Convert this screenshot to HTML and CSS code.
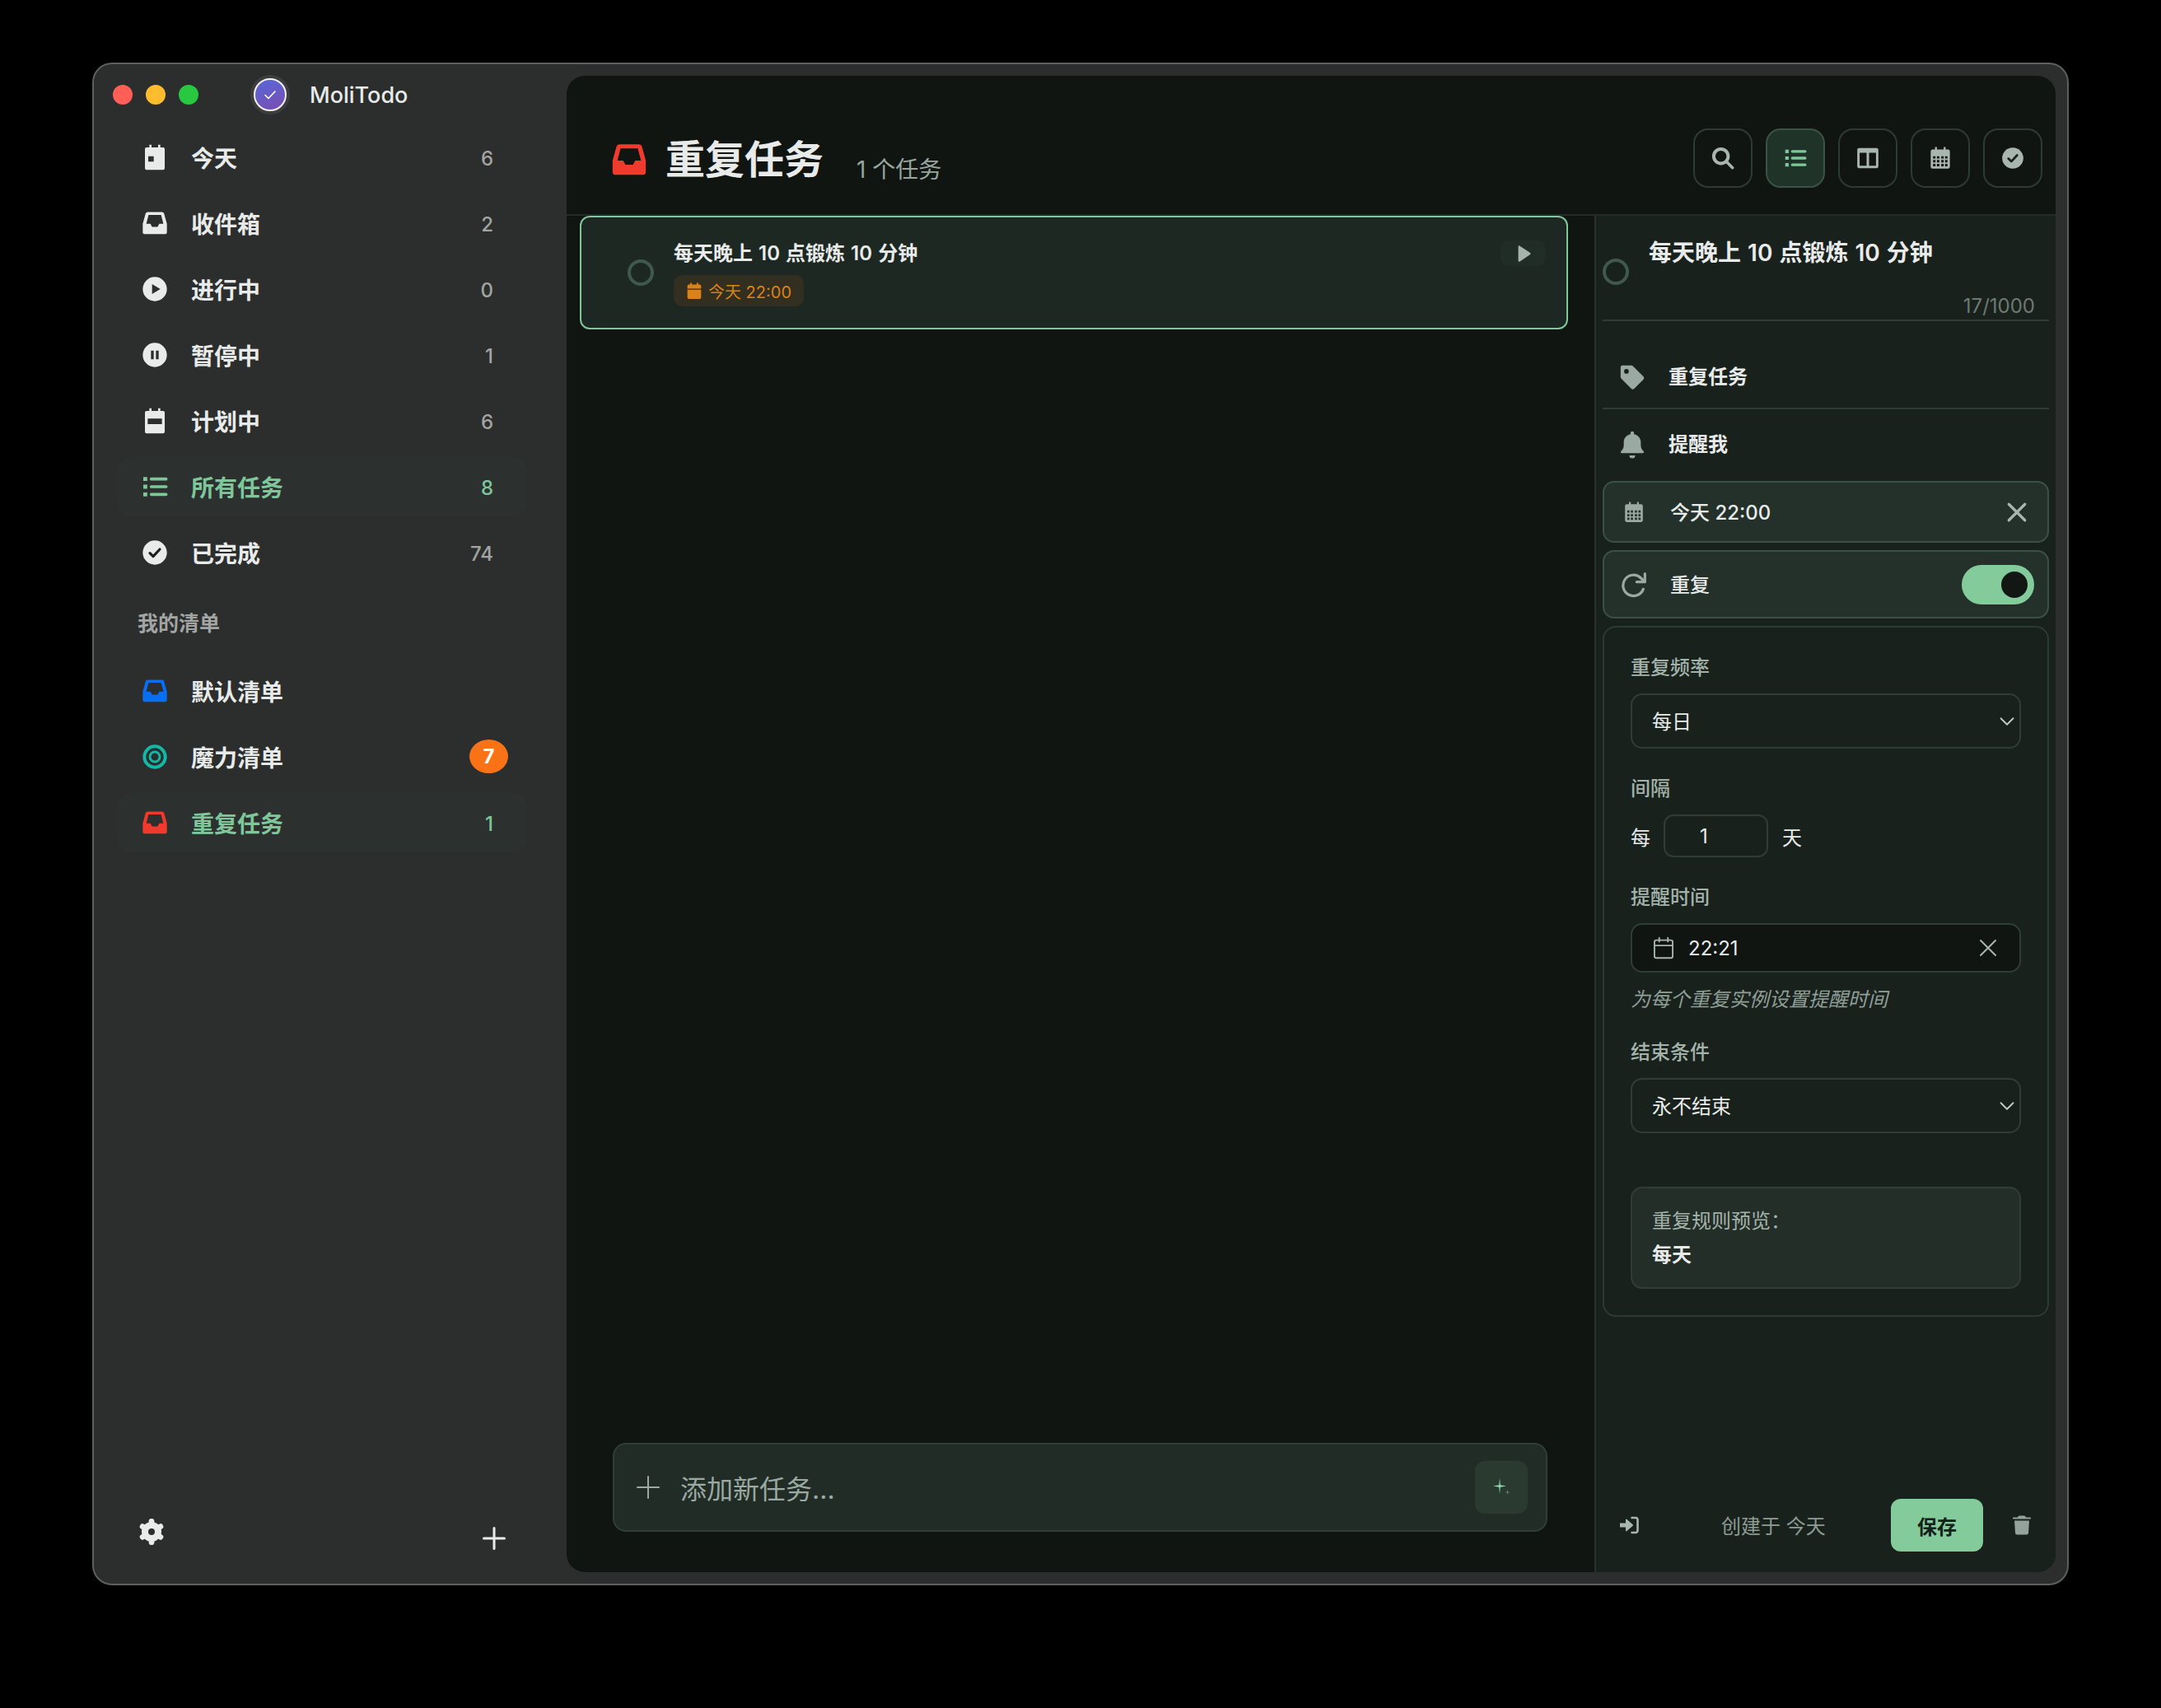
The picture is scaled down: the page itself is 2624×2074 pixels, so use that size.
FILE: index.html
```html
<!DOCTYPE html>
<html lang="zh-CN">
<head>
    <meta charset="UTF-8">
    <title>MoliTodo</title>
    <link rel="stylesheet" href="styles.css">
</head>
<body>
    <svg class="icon-defs" xmlns="http://www.w3.org/2000/svg">
        <symbol id="i-today" viewBox="0 0 24 24"><path fill="currentColor" fill-rule="evenodd" d="M7 .5h2V3h6V.5h2V3h2.500A1.500 1.500 0 0 1 21 4.500V22a1.500 1.500 0 0 1-1.500 1.500h-15A1.500 1.500 0 0 1 3 22V4.500A1.500 1.500 0 0 1 4.500 3H7zM6 11v5h5v-5z"/></symbol>
        <symbol id="i-plan" viewBox="0 0 24 24"><path fill="currentColor" fill-rule="evenodd" d="M7 .5h2V3h6V.5h2V3h2.500A1.500 1.500 0 0 1 21 4.500V22a1.500 1.500 0 0 1-1.500 1.500h-15A1.500 1.500 0 0 1 3 22V4.500A1.500 1.500 0 0 1 4.500 3H7zM5.500 10v5h13v-5z"/></symbol>
        <symbol id="i-cal-solid" viewBox="0 0 24 24"><path fill="currentColor" d="M6 .5h2.500V3h7V.5H18V3h2a2 2 0 0 1 2 2v4H2V5a2 2 0 0 1 2-2h2zM2 10.500h20V22a2 2 0 0 1-2 2H4a2 2 0 0 1-2-2z"/></symbol>
        <symbol id="i-cal-grid" viewBox="0 0 24 24"><path fill="currentColor" fill-rule="evenodd" d="M6.500 .5h2V3h7V.5h2V3H20a2 2 0 0 1 2 2v16a2 2 0 0 1-2 2H4a2 2 0 0 1-2-2V5a2 2 0 0 1 2-2h2.500zM4.500 10v2.500H7V10zm4 0v2.500H11V10zm4.500 0v2.500h2.500V10zm4 0v2.500h2.500V10zM4.500 14v2.500H7V14zm4 0v2.500H11V14zm4.500 0v2.500h2.500V14zm4 0v2.500h2.500V14zM4.500 18v2.500H7V18zm4 0v2.500H11V18zm4.500 0v2.500h2.500V18zm4 0v2.500h2.500V18z"/></symbol>
        <symbol id="i-cal-line" viewBox="0 0 24 24"><g fill="none" stroke="currentColor" stroke-width="1.600" stroke-linecap="round"><rect x="2.500" y="4" width="19" height="18.500" rx="2"/><path d="M2.500 9.500h19M7.500 1.500v4M16.500 1.500v4"/></g></symbol>
        <symbol id="i-inbox" viewBox="0 0 24 24"><path fill="currentColor" fill-rule="evenodd" d="M5.500 1.800h13a2 2 0 0 1 1.900 1.400L23 12.500V20a2 2 0 0 1-2 2H3a2 2 0 0 1-2-2v-7.500l2.600-9.300A2 2 0 0 1 5.500 1.800zM6.300 4.500 4.200 12.500H8l1.500 2.800h5l1.500-2.800h3.800l-2.100-8z"/></symbol>
        <symbol id="i-play-circle" viewBox="0 0 24 24"><path fill="currentColor" fill-rule="evenodd" d="M12 1a11 11 0 1 1 0 22 11 11 0 0 1 0-22zM9.500 7.500v9l7.500-4.500z"/></symbol>
        <symbol id="i-pause-circle" viewBox="0 0 24 24"><path fill="currentColor" fill-rule="evenodd" d="M12 1a11 11 0 1 1 0 22 11 11 0 0 1 0-22zM8.500 8v8H11V8zm4.500 0v8h2.500V8z"/></symbol>
        <symbol id="i-check-circle" viewBox="0 0 24 24"><circle cx="12" cy="12" r="11" fill="currentColor"/><path d="M7.500 12.500l3 3 6-6.500" fill="none" stroke="#1b211e" stroke-width="2.400" stroke-linecap="round" stroke-linejoin="round"/></symbol>
        <symbol id="i-list" viewBox="0 0 24 24"><path fill="currentColor" d="M1.500 3.200h3.600v3.600H1.500zM1.500 10.200h3.600v3.600H1.500zM1.500 17.200h3.600v3.600H1.500z"/><path d="M8.800 5h13.400M8.800 12h13.400M8.800 19h13.400" fill="none" stroke="currentColor" stroke-width="2.800" stroke-linecap="round"/></symbol>
        <symbol id="i-target" viewBox="0 0 24 24"><g fill="none" stroke="currentColor"><circle cx="12" cy="12" r="9.500" stroke-width="3"/><circle cx="12" cy="12" r="4.500" stroke-width="2.200"/></g></symbol>
        <symbol id="i-gear" viewBox="0 0 24 24"><circle cx="12" cy="12" r="6" fill="none" stroke="currentColor" stroke-width="6"/><g stroke="currentColor" stroke-width="5" stroke-linecap="round"><path d="M12 2.500v3"/><path d="M12 18.500v3"/><path d="M3.800 7.200l2.600 1.500"/><path d="M17.600 15.300l2.600 1.500"/><path d="M3.800 16.800l2.600-1.500"/><path d="M17.600 8.700l2.600-1.500"/></g></symbol>
        <symbol id="i-search" viewBox="0 0 24 24"><g fill="none" stroke="currentColor" stroke-linecap="round"><circle cx="10" cy="10" r="7.500" stroke-width="3.400"/><path d="M15.500 15.500 22 22" stroke-width="3"/></g></symbol>
        <symbol id="i-columns" viewBox="0 0 24 24"><path fill="currentColor" fill-rule="evenodd" d="M3 1.500h18a2 2 0 0 1 2 2v17a2 2 0 0 1-2 2H3a2 2 0 0 1-2-2v-17a2 2 0 0 1 2-2zM3.500 6.500v13.500H10.700V6.500zm9.800 0v13.500h7.200V6.500z"/></symbol>
        <symbol id="i-play" viewBox="0 0 24 24"><path fill="currentColor" d="M5 2.500c0-1 1-1.500 1.800-1l14 9.500c.7.500.7 1.500 0 2l-14 9.500c-.8.500-1.800 0-1.800-1z"/></symbol>
        <symbol id="i-tag" viewBox="0 0 24 24"><path fill="currentColor" fill-rule="evenodd" d="M2 3.500A1.500 1.500 0 0 1 3.500 2h7.800a2 2 0 0 1 1.400.6l8.700 8.700a2 2 0 0 1 0 2.800l-7.600 7.600a2 2 0 0 1-2.800 0l-8.400-8.400A2 2 0 0 1 2 11.300zM7 5a2 2 0 1 0 0 4 2 2 0 0 0 0-4z"/></symbol>
        <symbol id="i-bell" viewBox="0 0 24 24"><path fill="currentColor" d="M12 .5a1.500 1.500 0 0 1 1.500 1.500v1c3.500.7 5.800 3.500 5.800 7v2.500c0 2 .9 3.700 2.400 5.200.6.600.2 1.600-.7 1.600H3c-.9 0-1.300-1-.7-1.600 1.500-1.500 2.400-3.200 2.400-5.200V10c0-3.500 2.300-6.300 5.800-7V2A1.500 1.500 0 0 1 12 .5zM9.500 21.200h5a2.500 2.500 0 0 1-5 0z"/></symbol>
        <symbol id="i-repeat" viewBox="0 0 24 24"><path d="M20.500 16a9.500 9.500 0 1 1-2.300-10.200L22 9.500M22 2v7.500h-7.500" fill="none" stroke="currentColor" stroke-width="2.400" stroke-linecap="round" stroke-linejoin="round"/></symbol>
        <symbol id="i-x" viewBox="0 0 24 24"><path d="M3 3l18 18M21 3 3 21" fill="none" stroke="currentColor" stroke-width="3" stroke-linecap="round"/></symbol>
        <symbol id="i-x-thin" viewBox="0 0 24 24"><path d="M3 3l18 18M21 3 3 21" fill="none" stroke="currentColor" stroke-width="2" stroke-linecap="round"/></symbol>
        <symbol id="i-chevron" viewBox="0 0 24 24"><path d="M2 7l10 10L22 7" fill="none" stroke="currentColor" stroke-width="2.400" stroke-linecap="round" stroke-linejoin="round"/></symbol>
        <symbol id="i-sign-in" viewBox="0 0 24 24"><path fill="currentColor" d="M1 9.500h7V5.200c0-.6.700-.9 1.200-.5l7.500 6.600c.4.400.4 1 0 1.400l-7.500 6.600c-.5.400-1.200.1-1.200-.5v-4.300H1z"/><path d="M15.500 3H20a2.500 2.500 0 0 1 2.500 2.500v13A2.500 2.500 0 0 1 20 21h-4.500" fill="none" stroke="currentColor" stroke-width="2.600" stroke-linecap="round"/></symbol>
        <symbol id="i-trash" viewBox="0 0 24 24"><path fill="currentColor" d="M9 .5h6c.6 0 1 .3 1.300.8L17 2.500h5c.6 0 1 .4 1 1s-.4 1-1 1H2c-.6 0-1-.4-1-1s.4-1 1-1h5l.7-1.200C8 .8 8.400.5 9 .5zM3 6.500h18L20 21.500a2.200 2.200 0 0 1-2.200 2H6.200a2.200 2.200 0 0 1-2.200-2z"/></symbol>
        <symbol id="i-plus" viewBox="0 0 24 24"><path d="M12 2v20M2 12h20" fill="none" stroke="currentColor" stroke-width="2.400" stroke-linecap="round"/></symbol>
        <symbol id="i-plus-thin" viewBox="0 0 24 24"><path d="M12 1v22M1 12h22" fill="none" stroke="currentColor" stroke-width="1.600"/></symbol>
        <symbol id="i-sparkle" viewBox="0 0 24 24"><path fill="currentColor" d="M10 1l.8 8.200L18 10.500l-7.200 1.300L10 20l-.8-8.200L2 10.500l7.200-1.300zM19.500 15l.3 2.700 2.700.3-2.700.3-.3 2.700-.3-2.700-2.700-.3 2.700-.3z"/></symbol>
    </svg>

    <div class="window">
        <aside class="sidebar">
            <div class="titlebar">
                <span class="light red"></span>
                <span class="light yellow"></span>
                <span class="light green"></span>
                <span class="logo">
                    <svg viewBox="0 0 24 24"><path d="M6 12.500l4 4 8-8.500" fill="none" stroke="#fff" stroke-width="1.600" stroke-linecap="round" stroke-linejoin="round"/></svg>
                </span>
                <span class="app-name">MoliTodo</span>
            </div>

            <nav class="nav">
                <a class="nav-item"><span class="nav-icon"><svg><use href="#i-today"/></svg></span><span class="nav-text">今天</span><span class="count">6</span></a>
                <a class="nav-item"><span class="nav-icon"><svg><use href="#i-inbox"/></svg></span><span class="nav-text">收件箱</span><span class="count">2</span></a>
                <a class="nav-item"><span class="nav-icon"><svg><use href="#i-play-circle"/></svg></span><span class="nav-text">进行中</span><span class="count">0</span></a>
                <a class="nav-item"><span class="nav-icon"><svg><use href="#i-pause-circle"/></svg></span><span class="nav-text">暂停中</span><span class="count">1</span></a>
                <a class="nav-item"><span class="nav-icon"><svg><use href="#i-plan"/></svg></span><span class="nav-text">计划中</span><span class="count">6</span></a>
                <a class="nav-item active"><span class="nav-icon"><svg><use href="#i-list"/></svg></span><span class="nav-text">所有任务</span><span class="count">8</span></a>
                <a class="nav-item"><span class="nav-icon"><svg><use href="#i-check-circle"/></svg></span><span class="nav-text">已完成</span><span class="count">74</span></a>

                <div class="nav-label">我的清单</div>

                <a class="nav-item"><span class="nav-icon blue"><svg><use href="#i-inbox"/></svg></span><span class="nav-text">默认清单</span></a>
                <a class="nav-item"><span class="nav-icon teal"><svg><use href="#i-target"/></svg></span><span class="nav-text">魔力清单</span><span class="badge">7</span></a>
                <a class="nav-item active"><span class="nav-icon red-icon"><svg><use href="#i-inbox"/></svg></span><span class="nav-text">重复任务</span><span class="count">1</span></a>
            </nav>

            <div class="sidebar-footer">
                <svg class="gear"><use href="#i-gear"/></svg>
                <svg class="add-list"><use href="#i-plus"/></svg>
            </div>
        </aside>

        <main class="main">
            <header class="header">
                <svg class="header-icon"><use href="#i-inbox"/></svg>
                <div class="header-title">
                    <h1>重复任务</h1>
                    <span class="task-total">1 个任务</span>
                </div>
                <div class="toolbar">
                    <button class="tool"><svg><use href="#i-search"/></svg></button>
                    <button class="tool active"><svg><use href="#i-list"/></svg></button>
                    <button class="tool"><svg><use href="#i-columns"/></svg></button>
                    <button class="tool"><svg><use href="#i-cal-grid"/></svg></button>
                    <button class="tool"><svg><use href="#i-check-circle"/></svg></button>
                </div>
            </header>

            <div class="content">
                <section class="list">
                    <div class="card">
                        <span class="ring"></span>
                        <div class="card-body">
                            <div class="card-title">每天晚上 10 点锻炼 10 分钟</div>
                            <span class="due"><svg><use href="#i-cal-solid"/></svg>今天 22:00</span>
                        </div>
                        <span class="play"><svg><use href="#i-play"/></svg></span>
                    </div>

                    <div class="add-bar">
                        <svg class="add-plus"><use href="#i-plus-thin"/></svg>
                        <span class="add-text">添加新任务...</span>
                        <span class="add-ai"><svg><use href="#i-sparkle"/></svg></span>
                    </div>
                </section>

                <section class="detail">
                    <div class="detail-head">
                        <span class="ring"></span>
                        <div class="detail-head-text">
                            <div class="detail-title">每天晚上 10 点锻炼 10 分钟</div>
                            <div class="char-count">17/1000</div>
                        </div>
                    </div>

                    <div class="meta-row tag-row"><svg><use href="#i-tag"/></svg><span>重复任务</span></div>
                    <div class="meta-row bell-row"><svg><use href="#i-bell"/></svg><span>提醒我</span></div>

                    <div class="box-row date-row">
                        <svg class="date-icon"><use href="#i-cal-grid"/></svg>
                        <span>今天 22:00</span>
                        <svg class="date-clear"><use href="#i-x"/></svg>
                    </div>
                    <div class="box-row repeat-row">
                        <svg class="repeat-icon"><use href="#i-repeat"/></svg>
                        <span>重复</span>
                        <span class="switch"></span>
                    </div>

                    <div class="repeat-panel">
                        <div class="field-label">重复频率</div>
                        <div class="select"><span>每日</span><svg><use href="#i-chevron"/></svg></div>

                        <div class="field-label">间隔</div>
                        <div class="interval">
                            <span>每</span>
                            <span class="num-input">1</span>
                            <span>天</span>
                        </div>

                        <div class="field-label">提醒时间</div>
                        <div class="time-input">
                            <svg class="time-icon"><use href="#i-cal-line"/></svg>
                            <span>22:21</span>
                            <svg class="time-clear"><use href="#i-x-thin"/></svg>
                        </div>
                        <div class="hint">为每个重复实例设置提醒时间</div>

                        <div class="field-label">结束条件</div>
                        <div class="select"><span>永不结束</span><svg><use href="#i-chevron"/></svg></div>

                        <div class="preview">
                            <div class="preview-label">重复规则预览：</div>
                            <div class="preview-value">每天</div>
                        </div>
                    </div>

                    <div class="detail-footer">
                        <svg class="foot-in"><use href="#i-sign-in"/></svg>
                        <span class="created">创建于 今天</span>
                        <button class="save">保存</button>
                        <svg class="foot-trash"><use href="#i-trash"/></svg>
                    </div>
                </section>
            </div>
        </main>
    </div>
</body>
</html>
```

FILE: styles.css
```css
* {
    box-sizing: border-box;
}

html, body {
    margin: 0;
    height: 2074px;
    background-color: #000;
}

body {
    padding: 76px 0 0 112px;
    font-family: Inter, "Noto Sans CJK SC", sans-serif;
    font-size: 24px;
    color: #e8ebe9;
    overflow: hidden;
}

svg {
    display: block;
}

.icon-defs {
    display: none;
}

.window {
    display: flex;
    width: 2400px;
    height: 1849px;
    background-color: #2b2e2d;
    border: 2px solid #5c5f5e;
    border-radius: 24px;
}

/* sidebar */
.sidebar {
    display: flex;
    flex-direction: column;
    width: 574px;
}

.titlebar {
    display: flex;
    align-items: center;
    gap: 16px;
    height: 74px;
    margin-bottom: 2.5px;
    padding-left: 23px;
}

.light {
    width: 24px;
    height: 24px;
    border-radius: 50%;
}

.light.red { background-color: #ff5f57; }
.light.yellow { background-color: #febc2e; }
.light.green { background-color: #28c840; }

.logo {
    display: flex;
    align-items: center;
    justify-content: center;
    width: 40px;
    height: 40px;
    margin-left: 51px;
    border: 2px solid #f2f2f8;
    border-radius: 50%;
    background: linear-gradient(160deg, #5868d8, #7a4cb0);
    box-shadow: 0 0 0 4px #3b3e3d;
}

.logo svg {
    width: 24px;
    height: 24px;
}

.app-name {
    margin-left: 12px;
    font-size: 27px;
    font-weight: 500;
}

.nav {
    display: flex;
    flex-direction: column;
    gap: 8px;
    margin-left: 29px;
    width: 497px;
}

.nav-item {
    display: flex;
    align-items: center;
    height: 72px;
    padding: 0 41px 0 29px;
    border-radius: 16px;
    font-size: 28px;
    font-weight: 600;
}

.nav-item.active {
    background-color: #2c3130;
    color: #7fc79a;
}

.nav-icon {
    display: flex;
    align-items: center;
    justify-content: center;
    width: 32px;
    height: 32px;
    margin-right: 28px;
}

.nav-icon svg {
    width: 32px;
    height: 32px;
}

.nav-icon.blue { color: #0a6ef0; }
.nav-icon.teal { color: #14b8a6; }
.nav-icon.red-icon { color: #f03a2e; }

.nav-text {
    flex: 1;
}

.count {
    padding-top: 3px;
    font-size: 24px;
    font-weight: 500;
    color: #a2a5a3;
}

.active .count {
    color: #7fc79a;
}

.badge {
    display: flex;
    align-items: center;
    justify-content: center;
    width: 47px;
    height: 41px;
    margin-right: -18px;
    border-radius: 50%;
    background-color: #f97316;
    color: #fff;
    font-size: 24px;
    font-weight: 700;
}

.nav-label {
    display: flex;
    align-items: center;
    height: 80px;
    padding-left: 24px;
    font-size: 25px;
    font-weight: 600;
    color: #a2a5a3;
}

.sidebar-footer {
    display: flex;
    align-items: flex-end;
    justify-content: space-between;
    margin-top: auto;
    padding: 0 73px 40px 54px;
}

.gear {
    width: 32px;
    height: 32px;
    margin-bottom: 7px;
}

.add-list {
    width: 30px;
    height: 30px;
}

/* main panel */
.main {
    display: flex;
    flex-direction: column;
    flex: 1;
    margin: 14px 14px 14px 0;
    background-color: #101512;
    border-radius: 22px;
    overflow: hidden;
}

.header {
    display: flex;
    align-items: center;
    height: 170px;
    padding: 64px 16px 32px 54px;
    border-bottom: 2px solid #232c27;
}

.header-icon {
    width: 44px;
    height: 44px;
    margin: 4px 22px 0 0;
    color: #f03a2e;
}

.header-title {
    display: flex;
    align-items: flex-end;
    gap: 40px;
    flex: 1;
    padding-top: 4px;
}

h1 {
    margin: 0;
    font-size: 48px;
    font-weight: 700;
    line-height: 60px;
}

.task-total {
    font-size: 28px;
    line-height: 36px;
    color: #97a69e;
}

.toolbar {
    display: flex;
    gap: 16px;
}

.tool {
    display: flex;
    align-items: center;
    justify-content: center;
    width: 72px;
    height: 72px;
    padding: 0;
    background: none;
    border: 2px solid #303a35;
    border-radius: 18px;
    color: #a9b5af;
}

.tool svg {
    width: 28px;
    height: 28px;
}

.tool.active {
    background-color: #1f3329;
    border-color: #3a5346;
    color: #7fc79a;
}

.content {
    display: flex;
    flex: 1;
    min-height: 0;
}

.list {
    display: flex;
    flex-direction: column;
    width: 1250px;
    padding: 0 32px 49px 16px;
    border-right: 2px solid #29332e;
}

.ring {
    flex-shrink: 0;
    width: 32px;
    height: 32px;
    border: 4px solid #3f5a4c;
    border-radius: 50%;
}

.card {
    display: flex;
    align-items: center;
    height: 138px;
    padding: 0 25px 0 56px;
    background-color: #1d2822;
    border: 2px solid #7fc79a;
    border-radius: 12px;
}

.card-body {
    flex: 1;
    margin-left: 24px;
}

.card-title {
    padding-top: 2px;
    font-size: 24px;
    font-weight: 600;
    line-height: 32px;
    word-spacing: 1px;
}

.due {
    display: inline-flex;
    align-items: center;
    gap: 7px;
    height: 38px;
    margin-top: 10px;
    padding: 0 15px;
    background-color: #322e20;
    border-radius: 10px;
    color: #d9821a;
    font-size: 20px;
}

.due svg {
    width: 20px;
    height: 20px;
}

.play {
    display: flex;
    align-items: center;
    justify-content: center;
    align-self: flex-start;
    width: 55px;
    height: 31px;
    margin-top: 28px;
    background-color: #202c26;
    border-radius: 10px;
    color: #a4b3ab;
}

.play svg {
    width: 22px;
    height: 22px;
}

.add-bar {
    display: flex;
    align-items: center;
    height: 108px;
    margin: auto 25px 0 40px;
    padding: 0 22px 0 26px;
    background-color: #212c26;
    border: 2px solid #303e36;
    border-radius: 16px;
}

.add-plus {
    width: 30px;
    height: 30px;
    color: #9aa9a1;
}

.add-text {
    flex: 1;
    margin-left: 24px;
    font-size: 32px;
    color: #9aa9a1;
}

.add-ai {
    display: flex;
    align-items: center;
    justify-content: center;
    width: 64px;
    height: 64px;
    background-color: #2b3a30;
    border-radius: 12px;
    color: #8fdcae;
}

.add-ai svg {
    width: 24px;
    height: 24px;
}

/* detail panel */
.detail {
    display: flex;
    flex-direction: column;
    flex: 1;
    padding: 0 8px 25px;
    background-color: #19211d;
}

.detail-head {
    display: flex;
    align-items: flex-start;
    gap: 24px;
    height: 128px;
    padding-top: 27px;
    border-bottom: 2px solid #2f3b35;
}

.detail-head .ring {
    margin-top: 25px;
}

.detail-head-text {
    flex: 1;
}

.detail-title {
    font-size: 28px;
    font-weight: 600;
    line-height: 36px;
    word-spacing: 1px;
}

.char-count {
    margin-top: 32px;
    padding-right: 17px;
    text-align: right;
    line-height: 30px;
    color: #6d7a73;
}

.meta-row {
    display: flex;
    align-items: center;
    gap: 27px;
    padding-left: 19px;
    font-weight: 600;
    line-height: 36px;
}

.meta-row svg {
    width: 34px;
    height: 34px;
    color: #9aa9a1;
}

.tag-row {
    padding-top: 50px;
    padding-bottom: 19px;
    border-bottom: 2px solid #2f3b35;
}

.bell-row {
    padding-top: 25px;
    padding-bottom: 26px;
}

.box-row {
    display: flex;
    align-items: center;
    background-color: #24312a;
    border: 2px solid #3a5146;
    border-radius: 14px;
    font-weight: 500;
}

.date-row {
    height: 75px;
    padding: 0 24px 0 23px;
}

.date-row span,
.repeat-row span:not(.switch),
.select span,
.created {
    margin-top: -2px;
}

.date-icon {
    width: 26px;
    height: 26px;
    margin-right: 31px;
    color: #9aa9a1;
}

.date-clear {
    width: 26px;
    height: 26px;
    margin-left: auto;
    color: #a9b5af;
}

.repeat-row {
    height: 83px;
    margin-top: 9px;
    padding: 0 16px 0 20px;
}

.repeat-icon {
    width: 32px;
    height: 32px;
    margin-right: 28px;
    color: #9aa9a1;
}

.switch {
    display: flex;
    align-items: center;
    justify-content: flex-end;
    width: 88px;
    height: 48px;
    margin-left: auto;
    padding-right: 8px;
    background-color: #83cb9b;
    border-radius: 24px;
}

.switch::after {
    content: "";
    width: 32px;
    height: 32px;
    background-color: #121714;
    border-radius: 50%;
}

.repeat-panel {
    height: 839px;
    margin-top: 9px;
    padding: 0 32px;
    border: 2px solid #2b3a32;
    border-radius: 16px;
}

.field-label {
    margin-top: 33px;
    margin-bottom: 15px;
    line-height: 32px;
    font-weight: 500;
    color: #a3b3aa;
}

.select {
    display: flex;
    align-items: center;
    justify-content: space-between;
    height: 67px;
    padding: 0 6px 0 24px;
    border: 2px solid #2f3d36;
    border-radius: 14px;
}

.select svg {
    width: 18px;
    height: 18px;
    color: #c4ccc7;
}

.interval {
    display: flex;
    align-items: center;
}

.num-input {
    width: 127px;
    height: 52px;
    margin: 0 17px 0 16px;
    padding-left: 42px;
    border: 2px solid #2f3d36;
    border-radius: 12px;
    line-height: 50px;
}

.time-input {
    display: flex;
    align-items: center;
    height: 60px;
    padding: 0 26px 0 24px;
    background-color: #101512;
    border: 2px solid #2f3d36;
    border-radius: 14px;
}

.time-icon {
    width: 28px;
    height: 28px;
    margin-right: 16px;
    color: #a9b5af;
}

.time-clear {
    width: 24px;
    height: 24px;
    margin-left: auto;
    color: #a9b5af;
}

.hint {
    margin-top: 17px;
    font-style: italic;
    line-height: 32px;
    color: #8f9e96;
}

.hint + .field-label {
    margin-top: 32px;
}

.preview {
    height: 124px;
    margin-top: 65px;
    padding: 24px 24px 0;
    background-color: #242e28;
    border: 2px solid #2f3d36;
    border-radius: 14px;
    line-height: 32px;
}

.preview-label {
    color: #a3b3aa;
}

.preview-value {
    margin-top: 9px;
    font-weight: 600;
}

.detail-footer {
    display: flex;
    align-items: center;
    height: 64px;
    margin-top: auto;
    padding: 0 21px 0 20px;
}

.foot-in {
    width: 24px;
    height: 24px;
    color: #a9b5af;
}

.created {
    margin-left: 100px;
    color: #8d9b93;
}

.save {
    width: 112px;
    height: 64px;
    margin-left: auto;
    margin-right: 35px;
    padding: 0;
    background-color: #83cb9b;
    border: 0;
    border-radius: 12px;
    color: #14201a;
    font: 600 24px Inter, "Noto Sans CJK SC", sans-serif;
}

.foot-trash {
    width: 24px;
    height: 26px;
    color: #93a39b;
}
```
